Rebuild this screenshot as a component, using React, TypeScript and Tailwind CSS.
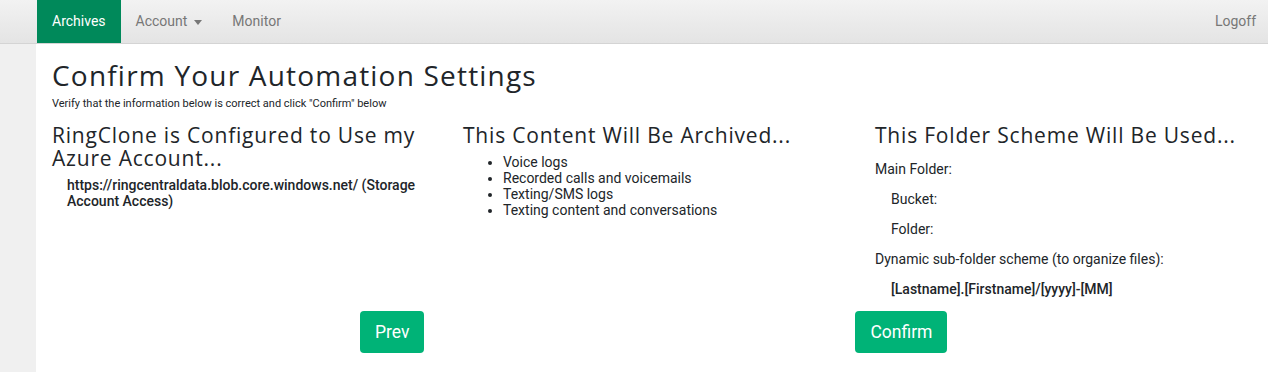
import React from 'react'

const heading = { fontFamily: '"Open Sans", "DejaVu Sans", sans-serif' }
const body = { fontFamily: 'Roboto, "Liberation Sans", sans-serif' }

function NavBar() {
  return (
    <nav
      className="flex h-[44px] items-stretch border-b border-[#d4d4d4] bg-gradient-to-b from-[#f2f2f2] to-[#e4e4e4] text-[14px]"
      style={body}
    >
      <div className="w-[37px]" />
      <a className="flex items-center bg-[#00895a] px-[15px] text-white">Archives</a>
      <a className="flex items-center gap-[7px] px-[15px] text-[#777]">
        Account
        <span className="mt-[1px] h-0 w-0 border-x-[4px] border-t-[5px] border-x-transparent border-t-[#777]" />
      </a>
      <a className="flex items-center px-[15px] text-[#777]">Monitor</a>
      <div className="flex-1" />
      <a className="flex items-center pr-[12px] text-[#777]">Logoff</a>
    </nav>
  )
}

export default function App() {
  return (
    <div className="flex h-[372px] w-[1268px] flex-col overflow-hidden bg-white text-[#212529]">
      <NavBar />
      <div className="flex flex-1">
        <div className="w-[36px] bg-[#f0f0f0]" />
        <main className="flex-1 pt-[13px]">
          <div className="px-[16px]">
            <h1 className="text-[28px] leading-[36px] tracking-[1.2px]" style={heading}>
              Confirm Your Automation Settings
            </h1>
            <p className="mt-[4px] text-[11px] leading-[13px]" style={body}>
              Verify that the information below is correct and click "Confirm" below
            </p>
          </div>

          <div className="mt-[14px] grid grid-cols-[411px_412px_1fr] pl-[1px]" style={body}>
            <section className="px-[15px]">
              <h2 className="text-[21px] leading-[23px] tracking-[0.8px]" style={heading}>
                RingClone is Configured to Use my Azure Account...
              </h2>
              <p className="mt-[7px] pl-[15px] text-[14px] font-medium leading-[16px]">
                https://ringcentraldata.blob.core.windows.net/ (Storage Account Access)
              </p>
            </section>

            <section className="px-[15px]">
              <h2 className="text-[21px] leading-[23px] tracking-[0.8px]" style={heading}>
                This Content Will Be Archived...
              </h2>
              <ul className="mt-[7px] list-disc pl-[40px] text-[14px] leading-[16px]">
                <li>Voice logs</li>
                <li>Recorded calls and voicemails</li>
                <li>Texting/SMS logs</li>
                <li>Texting content and conversations</li>
              </ul>
            </section>

            <section className="px-[15px] text-[14px] leading-[16px]">
              <h2 className="text-[21px] leading-[23px] tracking-[0.8px]" style={heading}>
                This Folder Scheme Will Be Used...
              </h2>
              <div className="mt-[14px] flex flex-col gap-[14px]">
                <p>Main Folder:</p>
                <p className="pl-[16px]">Bucket:</p>
                <p className="pl-[16px]">Folder:</p>
                <p>Dynamic sub-folder scheme (to organize files):</p>
                <p className="pl-[16px] font-medium">[Lastname].[Firstname]/[yyyy]-[MM]</p>
              </div>
            </section>
          </div>

          <div className="mt-[14px] flex gap-[431px] pl-[324px]" style={body}>
            <button className="h-[42px] rounded-[4px] bg-[#00b377] px-[15px] text-[17.5px] text-white">
              Prev
            </button>
            <button className="h-[42px] rounded-[4px] bg-[#00b377] px-[15px] text-[17.5px] text-white">
              Confirm
            </button>
          </div>
        </main>
      </div>
    </div>
  )
}
